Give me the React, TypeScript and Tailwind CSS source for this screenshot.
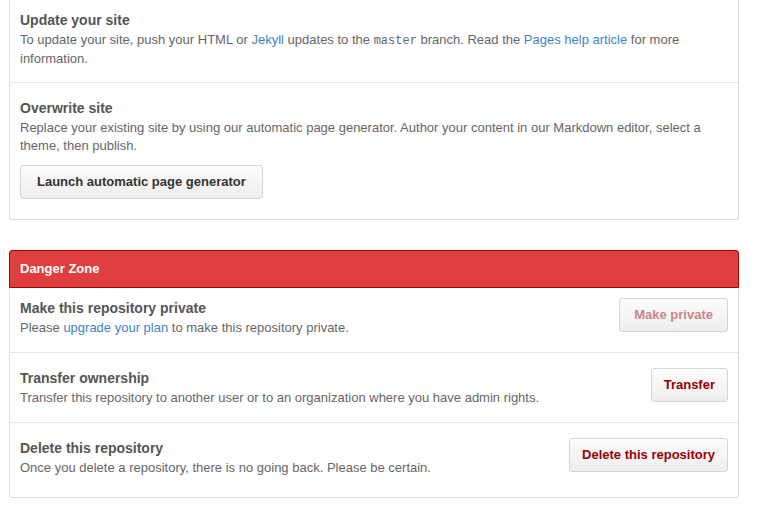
import React from "react";

const btn =
  "shrink-0 rounded-[3px] border border-[#d5d5d5] bg-gradient-to-b from-[#fcfcfc] to-[#eeeeee] py-[6px] text-[13px] font-bold leading-[20px] shadow-[inset_0_1px_0_rgba(255,255,255,0.9)]";

function Link({ children }: { children: React.ReactNode }) {
  return <a className="text-[#4183c4]">{children}</a>;
}

function DangerRow({
  title,
  children,
  action,
  disabled,
  className,
}: {
  title: string;
  children: React.ReactNode;
  action: string;
  disabled?: boolean;
  className?: string;
}) {
  return (
    <div className={`flex items-start justify-between gap-4 px-[10px] ${className ?? ""}`}>
      <div>
        <h4 className="text-[14px] font-bold leading-[20px] text-[#555]">{title}</h4>
        <p className="mt-px text-[13px] leading-[18px] text-[#666]">{children}</p>
      </div>
      <button className={`${btn} px-[12px] ${disabled ? "px-[14px] text-[#c98585]" : "text-[#990000]"}`}>
        {action}
      </button>
    </div>
  );
}

export default function App() {
  return (
    <div
      className="min-h-[515px] bg-white pl-[9px]"
      style={{ fontFamily: '"Liberation Sans", Arial, Helvetica, sans-serif' }}
    >
      {/* Pages box (top cut off) */}
      <div className="w-[730px] rounded-b-[3px] border-x border-b border-[#dddddd]">
        <div className="border-b border-[#e5e5e5] px-[10px] pt-[10px] pb-[14px]">
          <h4 className="text-[14px] font-bold leading-[20px] text-[#555]">Update your site</h4>
          <p className="mt-px text-[13px] leading-[18px] text-[#666]">
            To update your site, push your HTML or <Link>Jekyll</Link> updates to the{" "}
            <code className="text-[12px]" style={{ fontFamily: '"Liberation Mono", Consolas, monospace' }}>
              master
            </code>{" "}
            branch. Read the <Link>Pages help article</Link> for more information.
          </p>
        </div>
        <div className="px-[10px] pt-[15px] pb-[20px]">
          <h4 className="text-[14px] font-bold leading-[20px] text-[#555]">Overwrite site</h4>
          <p className="mt-px text-[13px] leading-[18px] text-[#666]">
            Replace your existing site by using our automatic page generator. Author your content in our Markdown
            editor, select a theme, then publish.
          </p>
          <button className={`${btn} mt-[10px] px-[16px] text-[#333]`}>Launch automatic page generator</button>
        </div>
      </div>

      {/* Danger zone */}
      <div className="mt-[30px] w-[730px]">
        <h3 className="rounded-t-[3px] border border-[#aa0000] bg-[#df3e3e] px-[10px] text-[13px] font-bold leading-[36px] text-white">
          Danger Zone
        </h3>
        <div className="rounded-b-[3px] border-x border-b border-[#dddddd]">
          <DangerRow title="Make this repository private" action="Make private" disabled className="pt-[10px] pb-[15px]">
            Please <Link>upgrade your plan</Link> to make this repository private.
          </DangerRow>
          <div className="border-t border-[#e5e5e5]" />
          <DangerRow title="Transfer ownership" action="Transfer" className="pt-[15px] pb-[15px]">
            Transfer this repository to another user or to an organization where you have admin rights.
          </DangerRow>
          <div className="border-t border-[#e5e5e5]" />
          <DangerRow title="Delete this repository" action="Delete this repository" className="pt-[15px] pb-[20px]">
            Once you delete a repository, there is no going back. Please be certain.
          </DangerRow>
        </div>
      </div>
    </div>
  );
}
